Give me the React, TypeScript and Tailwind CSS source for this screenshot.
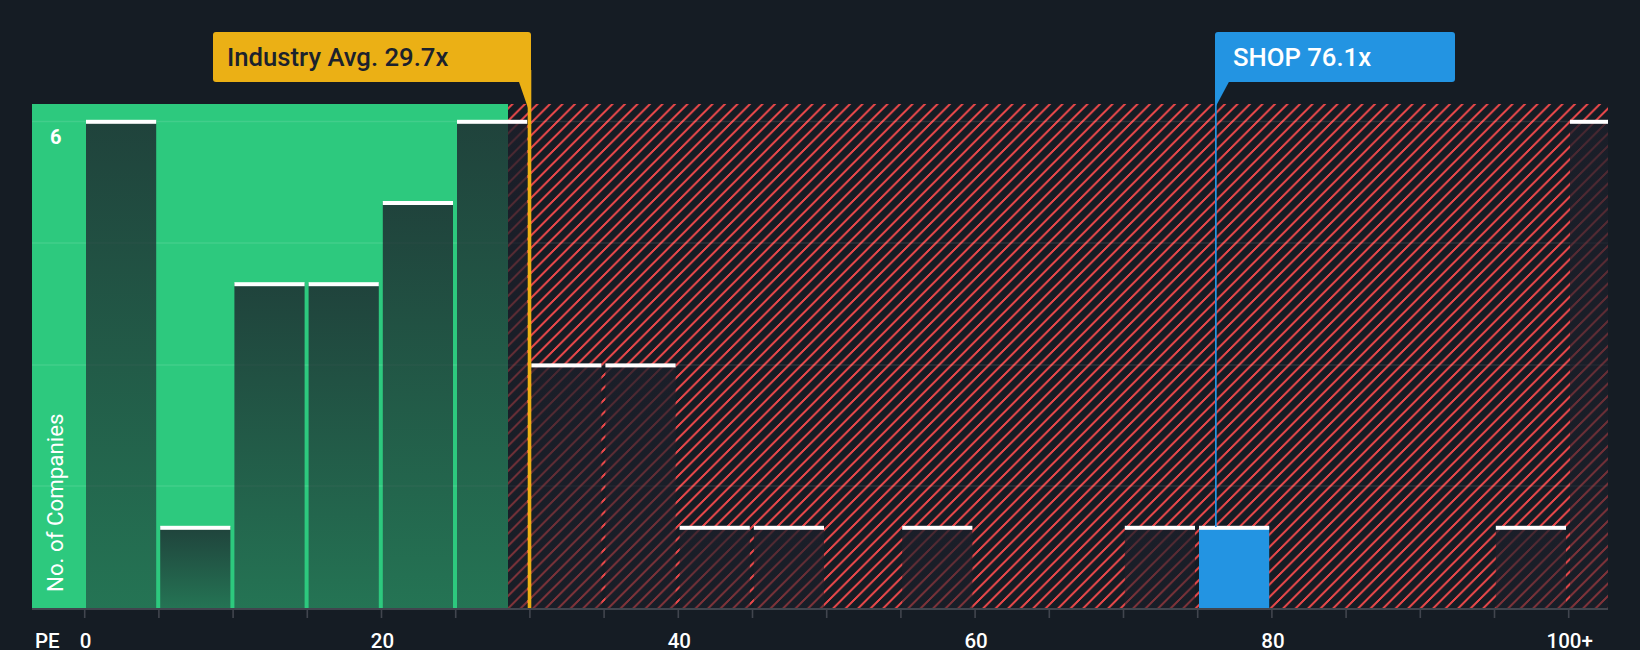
const TICK_START = 84.7;
const TICK_STEP = 74.2;
const AXIS_Y = 608;

// value -> top of bar, bin index along the x axis
const bars: { bin: number; count: number; blue?: boolean }[] = [
  { bin: 0, count: 6 },
  { bin: 1, count: 1 },
  { bin: 2, count: 4 },
  { bin: 3, count: 4 },
  { bin: 4, count: 5 },
  { bin: 5, count: 6 },
  { bin: 6, count: 3 },
  { bin: 7, count: 3 },
  { bin: 8, count: 1 },
  { bin: 9, count: 1 },
  { bin: 11, count: 1 },
  { bin: 14, count: 1 },
  { bin: 15, count: 1, blue: true },
  { bin: 19, count: 1 },
  { bin: 20, count: 6 },
];

const gridLines = [121.5, 243, 365, 486];
const axisLabels = [
  { text: "0", bin: 0 },
  { text: "20", bin: 4 },
  { text: "40", bin: 8 },
  { text: "60", bin: 12 },
  { text: "80", bin: 16 },
  { text: "100+", bin: 20 },
];

const barTop = (count: number) => AXIS_Y - count * 81.2;

function Chart() {
  return (
    <svg width={1640} height={650} className="block">
      <defs>
        <pattern id="hatch" width={12.5} height={12.5} patternUnits="userSpaceOnUse" patternTransform="translate(4 0)">
          <path d="M-3 3 L3 -3 M-3 15.5 L15.5 -3 M9.5 15.5 L15.5 9.5" stroke="#e8484a" strokeWidth={2.4} shapeRendering="crispEdges" />
        </pattern>
        <linearGradient id="barShade" x1="0" y1="0" x2="0" y2="1">
          <stop offset="0" stopColor="#1c1f2a" stopOpacity={0.79} />
          <stop offset="1" stopColor="#1c1f2a" stopOpacity={0.5} />
        </linearGradient>
      </defs>

      <rect x={508} y={104} width={1100} height={504} fill="url(#hatch)" />
      <rect x={32} y={104} width={476} height={504} fill="#2dc97e" />

      {gridLines.map((y) => (
        <rect key={y} x={32} y={y - 0.75} width={1576} height={1.5} fill="#ffffff" fillOpacity={0.1} />
      ))}

      {bars.map((b) => {
        const x = TICK_START + b.bin * TICK_STEP + 1.3;
        const w = b.bin === 20 ? 1608 - x : 70.2;
        const top = barTop(b.count);
        return (
          <g key={b.bin}>
            <rect x={x} y={top} width={w} height={AXIS_Y - top} fill={b.blue ? "#2394e2" : "url(#barShade)"} />
            <rect x={x} y={top - 1} width={w} height={4} fill="#ffffff" />
          </g>
        );
      })}

      <rect x={32} y={608} width={1576} height={2} fill="#41454e" />
      {Array.from({ length: 21 }, (_, i) => (
        <rect key={i} x={TICK_START + i * TICK_STEP - 0.8} y={610} width={1.6} height={8} fill="#41454e" />
      ))}

      {/* average and company markers */}
      <path d="M519 82 L530 82 L530 108 L528 108 Z" fill="#ebb015" />
      <rect x={527.7} y={70} width={3.6} height={538} fill="#ebb015" />
      <path d="M1215 78 L1231 78 L1216 106 L1215 106 Z" fill="#2394e2" />
      <rect x={1215} y={78} width={1.7} height={449} fill="#2394e2" />
    </svg>
  );
}

export default function App() {
  return (
    <div className="relative w-[1640px] h-[650px] overflow-hidden bg-[#151c24] font-['Roboto',sans-serif]">
      <Chart />

      <div className="absolute left-[213px] top-[32px] flex h-[50px] w-[318px] items-center rounded-[3px] bg-[#ebb015] pl-[14px] text-[25.7px] font-medium text-[#1b222d]">
        Industry Avg. 29.7x
      </div>
      <div className="absolute left-[1215px] top-[32px] flex h-[50px] w-[240px] items-center rounded-[3px] bg-[#2394e2] pl-[18px] text-[25.7px] font-medium text-white">
        SHOP 76.1x
      </div>

      <span className="absolute left-[50px] top-[127px] text-[20px] leading-5 font-bold text-white">6</span>
      <span className="absolute left-[44px] bottom-[58px] origin-bottom-left translate-x-[22px] -rotate-90 whitespace-nowrap text-[22.3px] leading-[22px] text-white">
        No. of Companies
      </span>

      <span className="absolute left-[35px] top-[632px] text-[20.5px] leading-[18px] font-medium text-white">PE</span>
      {axisLabels.map((l) => (
        <span
          key={l.text}
          className="absolute top-[632px] -translate-x-1/2 text-[20.5px] leading-[18px] font-medium text-white"
          style={{ left: TICK_START + l.bin * TICK_STEP + 1 }}
        >
          {l.text}
        </span>
      ))}
    </div>
  );
}
